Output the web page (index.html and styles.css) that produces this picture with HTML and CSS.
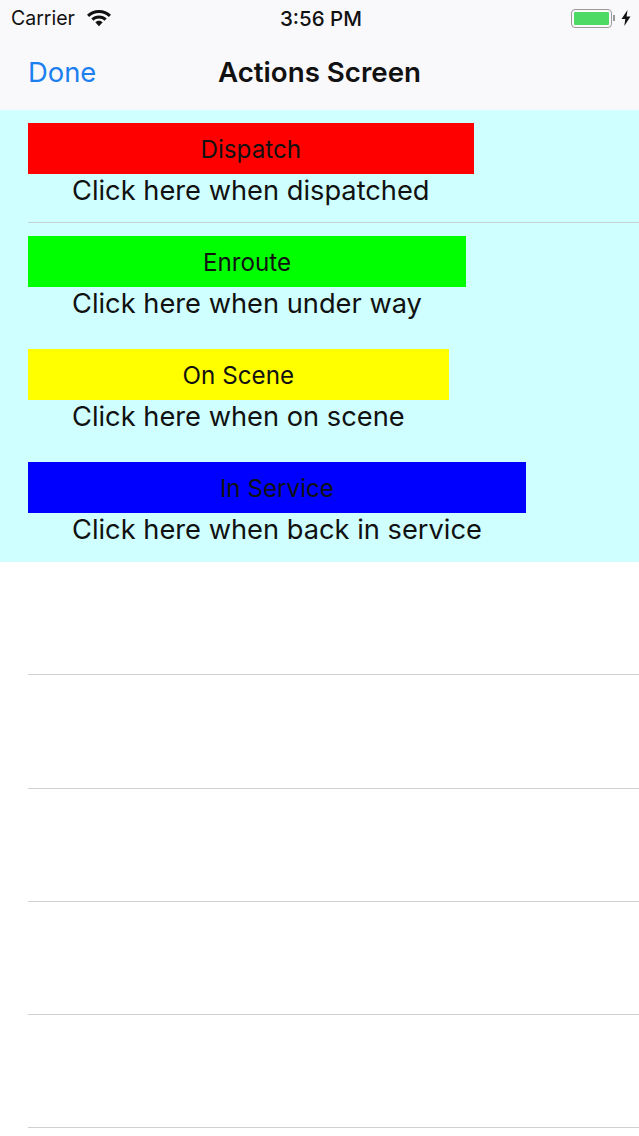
FILE: index.html
```html
<!DOCTYPE html>
<html lang="en">
<head>
    <meta charset="UTF-8">
    <meta name="viewport" content="width=device-width, initial-scale=1.0">
    <title>Actions Screen</title>
    <link rel="stylesheet" href="styles.css">
</head>
<body>

<!-- Status bar -->
<div class="status-bar">
    <div class="status-left">
        <span>Carrier</span>
        <svg class="wifi" viewBox="0 0 26 18" width="26" height="18">
            <path d="M13 1C8.300 1 4.100 2.800 1 5.800L3.200 8.100C5.800 5.600 9.200 4.100 13 4.100C16.800 4.100 20.200 5.600 22.800 8.100L25 5.800C21.900 2.800 17.700 1 13 1Z" fill="#111"/>
            <path d="M13 6.400C10 6.400 7.300 7.600 5.300 9.500L7.500 11.800C8.900 10.400 10.900 9.500 13 9.500C15.100 9.500 17.100 10.400 18.500 11.800L20.700 9.500C18.700 7.600 16 6.400 13 6.400Z" fill="#111"/>
            <path d="M13 11.800C11.500 11.800 10.200 12.400 9.300 13.300L13 17.200L16.700 13.300C15.800 12.400 14.500 11.800 13 11.800Z" fill="#111"/>
        </svg>
    </div>
    <div class="status-time">3:56 PM</div>
    <div class="status-right">
        <div class="battery"><div class="battery-fill"></div></div>
        <div class="battery-cap"></div>
        <svg class="bolt" viewBox="0 0 10 16" width="10" height="16">
            <path d="M6.500 0L0.500 9H4.300L3.300 16L9.500 6.500H5.600Z" fill="#111"/>
        </svg>
    </div>
</div>

<!-- Nav bar -->
<div class="nav-bar">
    <a class="nav-done">Done</a>
    <div class="nav-title">Actions Screen</div>
</div>

<!-- Action rows -->
<div class="actions">
    <div class="row row-line">
        <div class="cell">
            <div class="action-btn red">Dispatch</div>
            <div class="action-label">Click here when dispatched</div>
        </div>
    </div>
    <div class="row">
        <div class="cell">
            <div class="action-btn green">Enroute</div>
            <div class="action-label">Click here when under way</div>
        </div>
    </div>
    <div class="row">
        <div class="cell">
            <div class="action-btn yellow">On Scene</div>
            <div class="action-label">Click here when on scene</div>
        </div>
    </div>
    <div class="row">
        <div class="cell">
            <div class="action-btn blue">In Service</div>
            <div class="action-label">Click here when back in service</div>
        </div>
    </div>
</div>

<!-- Empty table rows -->
<div class="empty-rows">
    <div class="empty-row"></div>
    <div class="empty-row"></div>
    <div class="empty-row"></div>
    <div class="empty-row"></div>
    <div class="empty-row"></div>
</div>

</body>
</html>
```

FILE: styles.css
```css
body {
    margin: 0;
    height: 1136px;
    overflow: hidden;
    background-color: #ffffff;
    color: #111111;
    font-family: 'Inter', 'Liberation Sans', sans-serif;
}

.status-bar {
    height: 36px;
    background-color: #f9f8fa;
    display: grid;
    grid-template-columns: 1fr auto 1fr;
    align-items: center;
    padding: 0 8px 0 11px;
    font-size: 19.500px;
}

.status-left {
    display: flex;
    align-items: center;
    gap: 11px;
}

.status-time {
    font-weight: 500;
    font-size: 20.500px;
}

.status-right {
    display: flex;
    align-items: center;
    justify-content: flex-end;
}

.battery {
    width: 41px;
    height: 19px;
    box-sizing: border-box;
    border: 1.500px solid #9a9a9a;
    border-radius: 4px;
    padding: 2px;
}

.battery-fill {
    height: 100%;
    background-color: #4cd964;
    border-radius: 1px;
}

.battery-cap {
    width: 2px;
    height: 6px;
    margin: 0 6px 0 1px;
    background-color: #9a9a9a;
}

.nav-bar {
    height: 74px;
    background-color: #f9f8fa;
    display: grid;
    grid-template-columns: 1fr auto 1fr;
    align-items: center;
    padding: 0 28px 2px;
    box-sizing: border-box;
}

.nav-done {
    color: #1b7ff0;
    font-size: 27.400px;
}

.nav-title {
    font-size: 27.700px;
    font-weight: 600;
}

.actions {
    background-color: #cfffff;
}

.row {
    height: 113px;
    box-sizing: border-box;
    padding-top: 13px;
}

.row-line {
    border-bottom: 1px solid #c4d2d4;
    margin-left: 28px;
    padding-top: 13px;
}

.cell {
    display: inline-flex;
    flex-direction: column;
    margin-left: 28px;
}

.row-line .cell {
    margin-left: 0;
}

.action-btn {
    height: 51px;
    line-height: 53px;
    text-align: center;
    font-size: 24.200px;
}

.red { background-color: #ff0000; }
.green { background-color: #00ff00; }
.yellow { background-color: #ffff00; }
.blue { background-color: #0000ff; }

.action-label {
    padding: 0 44px;
    font-size: 27.250px;
    line-height: 33px;
    white-space: nowrap;
}

.empty-row {
    height: 113.300px;
    box-sizing: border-box;
    border-bottom: 1px solid #d0d0d4;
    margin-left: 28px;
}
```
